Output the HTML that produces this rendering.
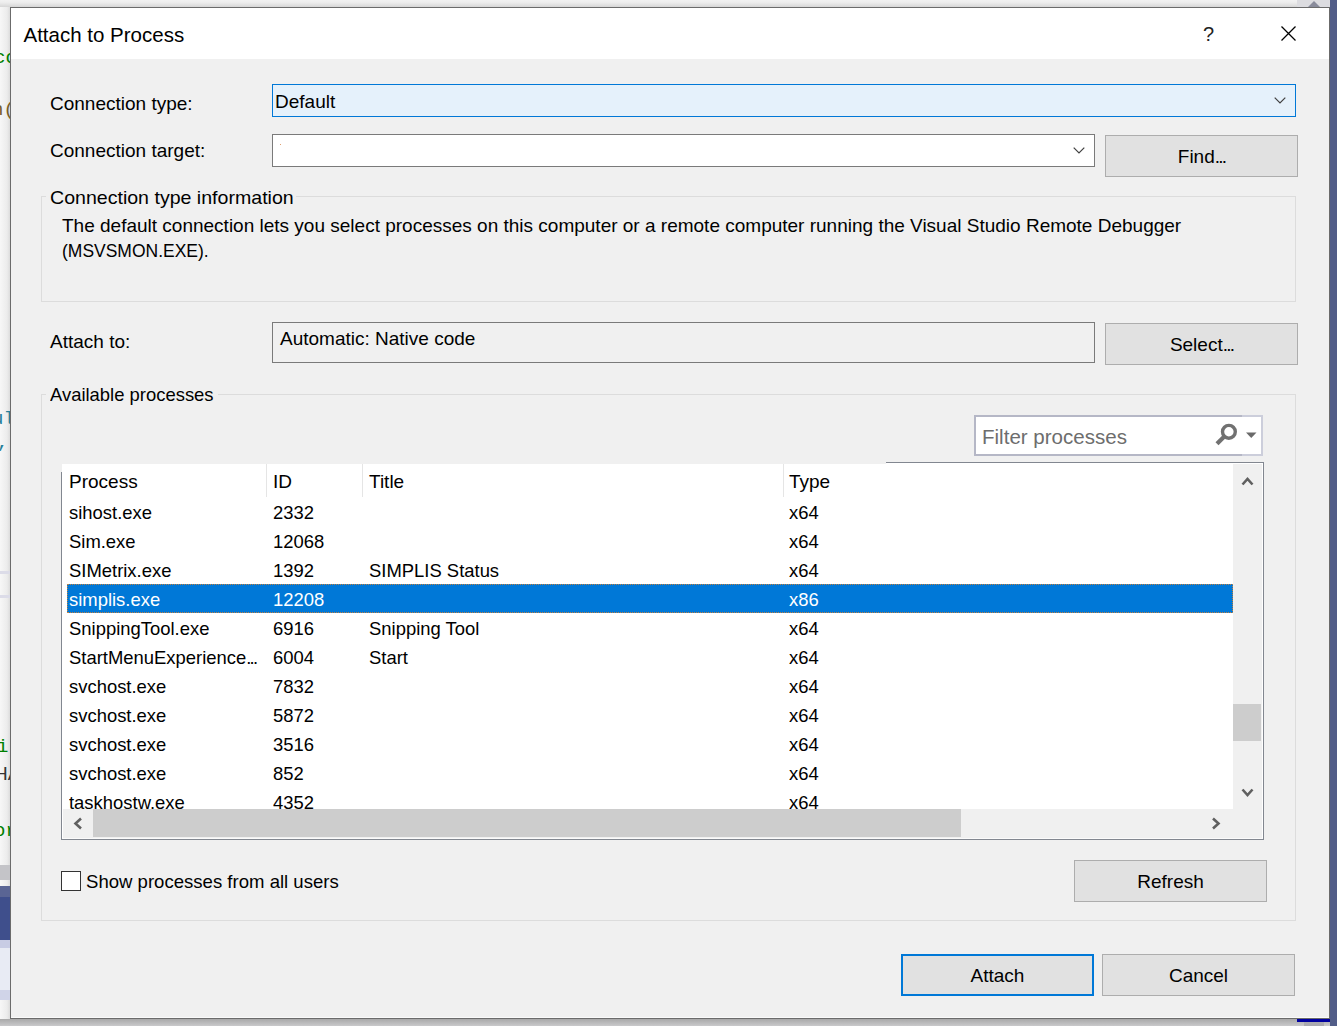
<!DOCTYPE html>
<html><head><meta charset="utf-8"><style>
html,body{margin:0;padding:0;width:1337px;height:1026px;overflow:hidden;background:#f0f0f0;position:relative}
.t{position:absolute;font-family:"Liberation Sans", sans-serif;white-space:nowrap;color:#000}
.dots{letter-spacing:-1.8px}
</style></head><body>
<div style="position:absolute;left:0px;top:0px;width:10px;height:1026px;background:linear-gradient(to right,#f7f7f7,#ececec 70%,#dcdcdc)"></div>
<div style="position:absolute;left:1330px;top:0px;width:7px;height:1026px;background:#525d88"></div>
<div style="position:absolute;left:0px;top:0px;width:1330px;height:7px;background:linear-gradient(to bottom,#f2f2f2,#ececec 40%,#d6d6d6)"></div>
<div style="position:absolute;left:1297px;top:0px;width:33px;height:7px;background:#dcdce0"></div>
<svg style="position:absolute;left:1307px;top:0" width="14" height="8"><polygon points="1,7 7,1 13,7" fill="#8a8c9c"/></svg>
<div style="position:absolute;left:0px;top:1019px;width:1330px;height:7px;background:linear-gradient(to bottom,#a9a9a9,#c9c9cb)"></div>
<div style="position:absolute;left:1297px;top:1019px;width:33px;height:3px;background:#0000a0"></div>
<div style="position:absolute;left:1304px;top:1022px;width:20px;height:4px;background:#aaaab0"></div>
<div style="position:absolute;left:0px;top:865px;width:10px;height:15px;background:#c4c4c8"></div>
<div style="position:absolute;left:0px;top:886px;width:10px;height:11px;background:#5a6594"></div>
<div style="position:absolute;left:0px;top:897px;width:10px;height:43px;background:#3f4f8c"></div>
<div style="position:absolute;left:0px;top:940px;width:10px;height:8px;background:#c8cce4"></div>
<div style="position:absolute;left:0px;top:948px;width:10px;height:42px;background:#e8ebf4"></div>
<div style="position:absolute;left:0px;top:990px;width:10px;height:10px;background:#d0d4e8"></div>
<div style="position:absolute;left:0px;top:571px;width:10px;height:3px;background:#dcdce8"></div>
<div style="position:absolute;left:0px;top:595px;width:10px;height:3px;background:#dcdce8"></div>
<div class="t" style="left:-6px;top:49px;font-size:19px;line-height:19px;color:#008000;font-family:'Liberation Mono'">co</div>
<div class="t" style="left:-8px;top:101px;font-size:19px;line-height:19px;color:#795e26;font-family:'Liberation Mono'">n(</div>
<div class="t" style="left:-8px;top:410px;font-size:19px;line-height:19px;color:#267f99;font-family:'Liberation Mono'">ul</div>
<div class="t" style="left:-3px;top:434px;font-size:19px;line-height:19px;color:#267f99;font-family:'Liberation Mono'">,</div>
<div class="t" style="left:-3px;top:738px;font-size:19px;line-height:19px;color:#008000;font-family:'Liberation Mono'">i</div>
<div class="t" style="left:-6px;top:764px;font-size:19px;line-height:19px;color:#333;font-family:'Liberation Sans'">HA</div>
<div class="t" style="left:-6px;top:822px;font-size:19px;line-height:19px;color:#008000;font-family:'Liberation Mono'">or</div>
<div style="position:absolute;left:10px;top:7px;width:1320px;height:1012px;background:#f0f0f0;border:1px solid #6b6b6b;box-sizing:border-box"></div>
<div style="position:absolute;left:11px;top:8px;width:1318px;height:51px;background:#ffffff"></div>
<div style="position:absolute;left:11px;top:1017px;width:1318px;height:1px;background:#fafafa"></div>
<div class="t" style="left:23.5px;top:25px;font-size:20.5px;line-height:20.5px;color:#000;">Attach to Process</div>
<div class="t" style="left:1203px;top:24px;font-size:20px;line-height:20px;color:#222;">?</div>
<svg style="position:absolute;left:1280px;top:25px" width="17" height="17"><path d="M1.5 1.5 L15.5 15.5 M15.5 1.5 L1.5 15.5" stroke="#000" stroke-width="1.3"/></svg>
<div class="t" style="left:50px;top:94px;font-size:19px;line-height:19px;color:#000;">Connection type:</div>
<div style="position:absolute;left:272px;top:84px;width:1024px;height:33px;background:#e5f1fb;border:1px solid #0078d7;box-sizing:border-box"></div>
<div class="t" style="left:275px;top:92px;font-size:19px;line-height:19px;color:#000;">Default</div>
<svg style="position:absolute;left:1274px;top:97px" width="13" height="8"><path d="M0.7 0.7 L6 6 L11.3 0.7" stroke="#404040" stroke-width="1.2" fill="none"/></svg>
<div class="t" style="left:50px;top:141px;font-size:19px;line-height:19px;color:#000;">Connection target:</div>
<div style="position:absolute;left:272px;top:134px;width:823px;height:33px;background:#ffffff;border:1px solid #7a7a7a;box-sizing:border-box"></div>
<div style="position:absolute;left:280px;top:144px;width:1px;height:1px;background:#e0a070"></div>
<svg style="position:absolute;left:1073px;top:147px" width="13" height="8"><path d="M0.7 0.7 L6 6 L11.3 0.7" stroke="#404040" stroke-width="1.2" fill="none"/></svg>
<div style="position:absolute;left:1105px;top:135px;width:193px;height:42px;background:#e1e1e1;border:1px solid #adadad;box-sizing:border-box"></div>
<div class="t" style="left:1105px;top:147px;width:193px;text-align:center;font-size:19px;line-height:19px">Find<span class="dots">...</span></div>
<div style="position:absolute;left:41px;top:196px;width:1255px;height:106px;border:1px solid #dcdcdc;box-sizing:border-box"></div>
<div style="position:absolute;left:46px;top:190px;width:250px;height:10px;background:#f0f0f0"></div>
<div class="t" style="left:50px;top:188px;font-size:19px;line-height:19px;color:#000;transform:scaleX(1.03);transform-origin:0 0">Connection type information</div>
<div class="t" style="left:62px;top:216px;font-size:19px;line-height:19px;color:#000;">The default connection lets you select processes on this computer or a remote computer running the Visual Studio Remote Debugger</div>
<div class="t" style="left:62px;top:241px;font-size:19px;line-height:19px;color:#000;transform:scaleX(0.92);transform-origin:0 0">(MSVSMON.EXE).</div>
<div class="t" style="left:50px;top:332px;font-size:19px;line-height:19px;color:#000;">Attach to:</div>
<div style="position:absolute;left:272px;top:322px;width:823px;height:41px;background:#f0f0f0;border:1px solid #7a7a7a;box-sizing:border-box"></div>
<div class="t" style="left:280px;top:329px;font-size:19px;line-height:19px;color:#000;">Automatic: Native code</div>
<div style="position:absolute;left:1105px;top:323px;width:193px;height:42px;background:#e1e1e1;border:1px solid #adadad;box-sizing:border-box"></div>
<div class="t" style="left:1105px;top:335px;width:193px;text-align:center;font-size:19px;line-height:19px">Select<span class="dots">...</span></div>
<div style="position:absolute;left:41px;top:394px;width:1255px;height:527px;border:1px solid #dcdcdc;box-sizing:border-box"></div>
<div style="position:absolute;left:46px;top:388px;width:172px;height:10px;background:#f0f0f0"></div>
<div class="t" style="left:50px;top:385px;font-size:19px;line-height:19px;color:#000;transform:scaleX(0.97);transform-origin:0 0">Available processes</div>
<div style="position:absolute;left:974px;top:415px;width:289px;height:41px;background:#ffffff;border:2px solid #cccedb;box-sizing:border-box"></div>
<div style="position:absolute;left:974px;top:415px;width:268px;height:2px;background:#b5b7c6"></div>
<div style="position:absolute;left:974px;top:454px;width:268px;height:2px;background:#b5b7c6"></div>
<div style="position:absolute;left:974px;top:415px;width:2px;height:41px;background:#b5b7c6"></div>
<div class="t" style="left:981.5px;top:427px;font-size:20px;line-height:20px;color:#6d6d6d;transform:scaleX(1.027);transform-origin:0 0">Filter processes</div>
<svg style="position:absolute;left:1212px;top:421px" width="28" height="28"><circle cx="16.9" cy="10.8" r="6.4" stroke="#717171" stroke-width="3.4" fill="none"/><path d="M12.8 15 L5 22.8" stroke="#717171" stroke-width="4.2" stroke-linecap="butt"/></svg>
<svg style="position:absolute;left:1246px;top:432px" width="11" height="7"><polygon points="0,0.5 10.5,0.5 5.25,6" fill="#6a6a6a"/></svg>
<div style="position:absolute;left:61px;top:462px;width:1203px;height:378px;background:#ffffff;border:1px solid #828790;box-sizing:border-box"></div>
<div style="position:absolute;left:61px;top:462px;width:825px;height:2px;background:#f0f0f0"></div>
<div style="position:absolute;left:61px;top:462px;width:1px;height:10px;background:#f0f0f0"></div>
<div style="position:absolute;left:63px;top:464px;width:1170px;height:33px;background:#ffffff"></div>
<div style="position:absolute;left:266px;top:464px;width:1px;height:33px;background:#e5e5e5"></div>
<div style="position:absolute;left:362px;top:464px;width:1px;height:33px;background:#e5e5e5"></div>
<div style="position:absolute;left:783px;top:464px;width:1px;height:33px;background:#e5e5e5"></div>
<div class="t" style="left:69px;top:472px;font-size:19px;line-height:19px;color:#000;">Process</div>
<div class="t" style="left:273px;top:472px;font-size:19px;line-height:19px;color:#000;">ID</div>
<div class="t" style="left:369px;top:472px;font-size:19px;line-height:19px;color:#000;">Title</div>
<div class="t" style="left:789px;top:472px;font-size:19px;line-height:19px;color:#000;">Type</div>
<div style="position:absolute;left:63px;top:497px;width:1170px;height:312px;overflow:hidden">
<div class="t" style="left:6px;top:6px;font-size:19px;line-height:19px;color:#000;transform:scaleX(0.97);transform-origin:0 0">sihost.exe</div>
<div class="t" style="left:210px;top:6px;font-size:19px;line-height:19px;color:#000;transform:scaleX(0.97);transform-origin:0 0">2332</div>
<div class="t" style="left:726px;top:6px;font-size:19px;line-height:19px;color:#000;transform:scaleX(0.97);transform-origin:0 0">x64</div>
<div class="t" style="left:6px;top:35px;font-size:19px;line-height:19px;color:#000;transform:scaleX(0.97);transform-origin:0 0">Sim.exe</div>
<div class="t" style="left:210px;top:35px;font-size:19px;line-height:19px;color:#000;transform:scaleX(0.97);transform-origin:0 0">12068</div>
<div class="t" style="left:726px;top:35px;font-size:19px;line-height:19px;color:#000;transform:scaleX(0.97);transform-origin:0 0">x64</div>
<div class="t" style="left:6px;top:64px;font-size:19px;line-height:19px;color:#000;transform:scaleX(0.97);transform-origin:0 0">SIMetrix.exe</div>
<div class="t" style="left:210px;top:64px;font-size:19px;line-height:19px;color:#000;transform:scaleX(0.97);transform-origin:0 0">1392</div>
<div class="t" style="left:306px;top:64px;font-size:19px;line-height:19px;color:#000;transform:scaleX(0.97);transform-origin:0 0">SIMPLIS Status</div>
<div class="t" style="left:726px;top:64px;font-size:19px;line-height:19px;color:#000;transform:scaleX(0.97);transform-origin:0 0">x64</div>
<div style="position:absolute;left:4px;top:87px;width:1166px;height:29px;background:#0078d7;box-sizing:border-box;border:1px dotted #c08040"></div>
<div class="t" style="left:6px;top:93px;font-size:19px;line-height:19px;color:#fff;transform:scaleX(0.97);transform-origin:0 0">simplis.exe</div>
<div class="t" style="left:210px;top:93px;font-size:19px;line-height:19px;color:#fff;transform:scaleX(0.97);transform-origin:0 0">12208</div>
<div class="t" style="left:726px;top:93px;font-size:19px;line-height:19px;color:#fff;transform:scaleX(0.97);transform-origin:0 0">x86</div>
<div class="t" style="left:6px;top:122px;font-size:19px;line-height:19px;color:#000;transform:scaleX(0.97);transform-origin:0 0">SnippingTool.exe</div>
<div class="t" style="left:210px;top:122px;font-size:19px;line-height:19px;color:#000;transform:scaleX(0.97);transform-origin:0 0">6916</div>
<div class="t" style="left:306px;top:122px;font-size:19px;line-height:19px;color:#000;transform:scaleX(0.97);transform-origin:0 0">Snipping Tool</div>
<div class="t" style="left:726px;top:122px;font-size:19px;line-height:19px;color:#000;transform:scaleX(0.97);transform-origin:0 0">x64</div>
<div class="t" style="left:6px;top:151px;font-size:19px;line-height:19px;color:#000;transform:scaleX(0.97);transform-origin:0 0">StartMenuExperience<span class="dots">...</span></div>
<div class="t" style="left:210px;top:151px;font-size:19px;line-height:19px;color:#000;transform:scaleX(0.97);transform-origin:0 0">6004</div>
<div class="t" style="left:306px;top:151px;font-size:19px;line-height:19px;color:#000;transform:scaleX(0.97);transform-origin:0 0">Start</div>
<div class="t" style="left:726px;top:151px;font-size:19px;line-height:19px;color:#000;transform:scaleX(0.97);transform-origin:0 0">x64</div>
<div class="t" style="left:6px;top:180px;font-size:19px;line-height:19px;color:#000;transform:scaleX(0.97);transform-origin:0 0">svchost.exe</div>
<div class="t" style="left:210px;top:180px;font-size:19px;line-height:19px;color:#000;transform:scaleX(0.97);transform-origin:0 0">7832</div>
<div class="t" style="left:726px;top:180px;font-size:19px;line-height:19px;color:#000;transform:scaleX(0.97);transform-origin:0 0">x64</div>
<div class="t" style="left:6px;top:209px;font-size:19px;line-height:19px;color:#000;transform:scaleX(0.97);transform-origin:0 0">svchost.exe</div>
<div class="t" style="left:210px;top:209px;font-size:19px;line-height:19px;color:#000;transform:scaleX(0.97);transform-origin:0 0">5872</div>
<div class="t" style="left:726px;top:209px;font-size:19px;line-height:19px;color:#000;transform:scaleX(0.97);transform-origin:0 0">x64</div>
<div class="t" style="left:6px;top:238px;font-size:19px;line-height:19px;color:#000;transform:scaleX(0.97);transform-origin:0 0">svchost.exe</div>
<div class="t" style="left:210px;top:238px;font-size:19px;line-height:19px;color:#000;transform:scaleX(0.97);transform-origin:0 0">3516</div>
<div class="t" style="left:726px;top:238px;font-size:19px;line-height:19px;color:#000;transform:scaleX(0.97);transform-origin:0 0">x64</div>
<div class="t" style="left:6px;top:267px;font-size:19px;line-height:19px;color:#000;transform:scaleX(0.97);transform-origin:0 0">svchost.exe</div>
<div class="t" style="left:210px;top:267px;font-size:19px;line-height:19px;color:#000;transform:scaleX(0.97);transform-origin:0 0">852</div>
<div class="t" style="left:726px;top:267px;font-size:19px;line-height:19px;color:#000;transform:scaleX(0.97);transform-origin:0 0">x64</div>
<div class="t" style="left:6px;top:296px;font-size:19px;line-height:19px;color:#000;transform:scaleX(0.97);transform-origin:0 0">taskhostw.exe</div>
<div class="t" style="left:210px;top:296px;font-size:19px;line-height:19px;color:#000;transform:scaleX(0.97);transform-origin:0 0">4352</div>
<div class="t" style="left:726px;top:296px;font-size:19px;line-height:19px;color:#000;transform:scaleX(0.97);transform-origin:0 0">x64</div>
</div>
<div style="position:absolute;left:1233px;top:464px;width:29px;height:345px;background:#f0f0f0"></div>
<div style="position:absolute;left:1233px;top:704px;width:28px;height:37px;background:#cdcdcd"></div>
<svg style="position:absolute;left:1241px;top:475px" width="14" height="11"><path d="M1.5 9.5 L6.5 4 L11.5 9.5" stroke="#606060" stroke-width="2.6" fill="none"/></svg>
<svg style="position:absolute;left:1241px;top:788px" width="14" height="11"><path d="M1.5 1.5 L6.5 7 L11.5 1.5" stroke="#606060" stroke-width="2.6" fill="none"/></svg>
<div style="position:absolute;left:63px;top:809px;width:1170px;height:29px;background:#f0f0f0"></div>
<div style="position:absolute;left:1233px;top:809px;width:29px;height:29px;background:#f0f0f0"></div>
<div style="position:absolute;left:93px;top:809px;width:868px;height:28px;background:#cdcdcd"></div>
<svg style="position:absolute;left:72px;top:817px" width="11" height="13"><path d="M9 1.5 L3.5 6.5 L9 11.5" stroke="#606060" stroke-width="2.6" fill="none"/></svg>
<svg style="position:absolute;left:1211px;top:817px" width="11" height="13"><path d="M2 1.5 L7.5 6.5 L2 11.5" stroke="#606060" stroke-width="2.6" fill="none"/></svg>
<div style="position:absolute;left:62px;top:838px;width:1201px;height:1px;background:#fbfbfb"></div>
<div style="position:absolute;left:61px;top:871px;width:20px;height:20px;background:#ffffff;border:1.5px solid #333333;box-sizing:border-box"></div>
<div class="t" style="left:86px;top:872px;font-size:19px;line-height:19px;color:#000;transform:scaleX(0.977);transform-origin:0 0">Show processes from all users</div>
<div style="position:absolute;left:1074px;top:860px;width:193px;height:42px;background:#e1e1e1;border:1px solid #adadad;box-sizing:border-box"></div>
<div class="t" style="left:1074px;top:872px;width:193px;text-align:center;font-size:19px;line-height:19px">Refresh</div>
<div style="position:absolute;left:901px;top:954px;width:193px;height:42px;background:#e1e1e1;border:2px solid #0078d7;box-sizing:border-box"></div>
<div class="t" style="left:901px;top:966px;width:193px;text-align:center;font-size:19px;line-height:19px">Attach</div>
<div style="position:absolute;left:1102px;top:954px;width:193px;height:42px;background:#e1e1e1;border:1px solid #adadad;box-sizing:border-box"></div>
<div class="t" style="left:1102px;top:966px;width:193px;text-align:center;font-size:19px;line-height:19px">Cancel</div>
</body></html>
